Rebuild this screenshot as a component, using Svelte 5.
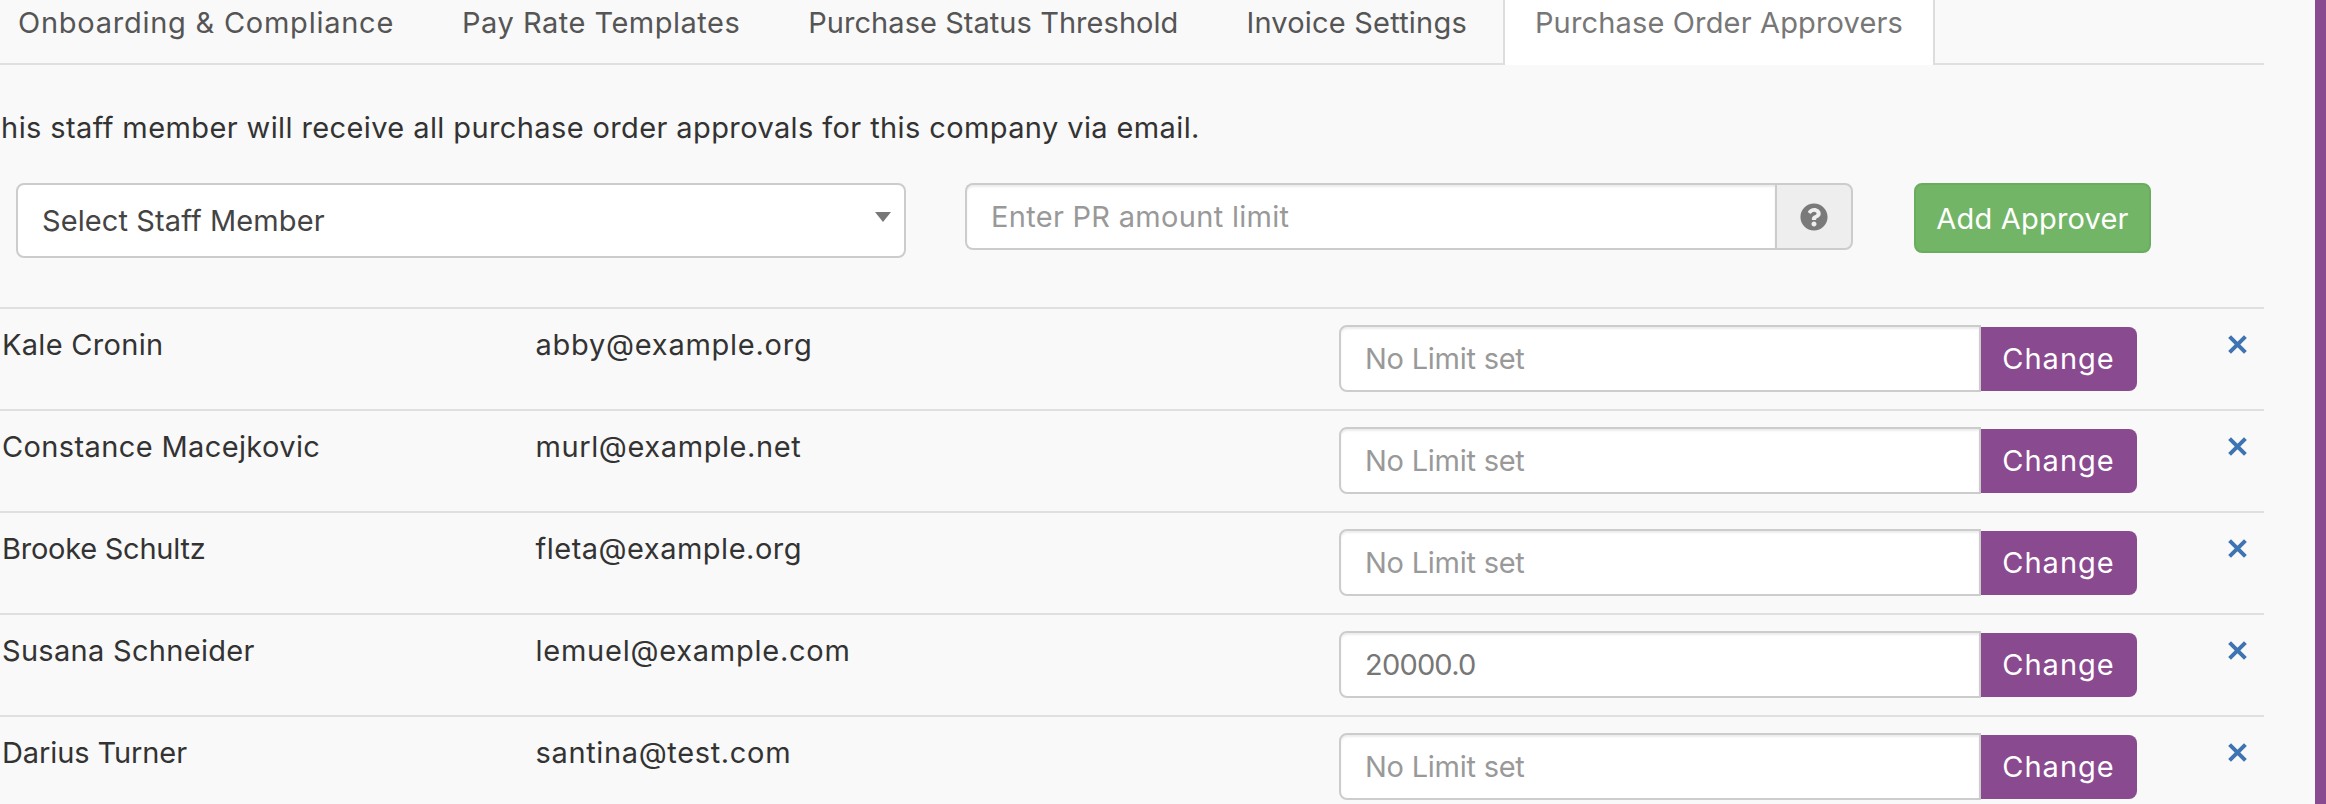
<script>
  const tabs = [
    { label: "Onboarding & Compliance", tracking: 0.75 },
    { label: "Pay Rate Templates", tracking: 0.5 },
    { label: "Purchase Status Threshold", tracking: 0.05 },
    { label: "Invoice Settings", tracking: 0.2 },
    { label: "Purchase Order Approvers", tracking: 0.15, active: true }
  ];

  const approvers = [
    { name: "Kale Cronin", email: "abby@example.org", limit: "", nameTracking: 0.3, emailTracking: 0.75 },
    { name: "Constance Macejkovic", email: "murl@example.net", limit: "", nameTracking: 0.38, emailTracking: 0.6 },
    { name: "Brooke Schultz", email: "fleta@example.org", limit: "", nameTracking: -0.25, emailTracking: 0.5 },
    { name: "Susana Schneider", email: "lemuel@example.com", limit: "20000.0", nameTracking: 0.3, emailTracking: 0.75 },
    { name: "Darius Turner", email: "santina@test.com", limit: "", nameTracking: -0.1, emailTracking: 0.65 }
  ];
</script>

<div class="page">
  <main class="content">
    <ul class="tabs">
      {#each tabs as tab}
        <li class="tab" class:active={tab.active} style="letter-spacing: {tab.tracking}px">{tab.label}</li>
      {/each}
    </ul>

    <p class="hint">This staff member will receive all purchase order approvals for this company via email.</p>

    <div class="form-row">
      <div class="select-wrap">
        <select class="staff-select">
          <option>Select Staff Member</option>
        </select>
        <span class="caret"></span>
      </div>
      <div class="limit-group">
        <input class="limit-input" type="text" placeholder="Enter PR amount limit" />
        <span class="addon">
          <svg viewBox="0 0 512 512" width="28" height="28" aria-hidden="true">
            <path fill="#7a7a7a" d="M504 256c0 136.997-111.043 248-248 248S8 392.997 8 256C8 119.083 119.043 8 256 8s248 111.083 248 248zM262.655 90c-54.497 0-89.255 22.957-116.549 63.758-3.536 5.286-2.353 12.415 2.715 16.258l34.699 26.31c5.205 3.947 12.621 3.008 16.665-2.122 17.864-22.658 30.113-35.797 57.303-35.797 20.429 0 45.698 13.148 45.698 32.958 0 14.976-12.363 22.667-32.534 33.976C247.128 238.528 216 254.941 216 296v4c0 6.627 5.373 12 12 12h56c6.627 0 12-5.373 12-12v-1.333c0-28.462 83.186-29.647 83.186-106.667 0-58.002-60.165-102-116.531-102zM256 338c-25.365 0-46 20.635-46 46 0 25.364 20.635 46 46 46s46-20.636 46-46c0-25.365-20.635-46-46-46z" />
          </svg>
        </span>
      </div>
      <button class="add-btn">Add Approver</button>
    </div>

    <div class="approvers">
      {#each approvers as person}
        <div class="row">
          <div class="name" style="letter-spacing: {person.nameTracking}px">{person.name}</div>
          <div class="email" style="letter-spacing: {person.emailTracking}px">{person.email}</div>
          <div class="limit-cell">
            <input class="row-input" type="text" placeholder="No Limit set" value={person.limit} />
            <button class="change-btn">Change</button>
          </div>
          <div class="remove">
            <svg viewBox="0 0 18 18" width="19" height="19" aria-hidden="true">
              <path d="M1.5 1.5 L16.5 16.5 M16.5 1.5 L1.5 16.5" stroke="#3f74b2" stroke-width="3.8" fill="none" />
            </svg>
          </div>
        </div>
      {/each}
    </div>
  </main>
  <div class="edge"></div>
</div>

<style>
  :global(body) {
    margin: 0;
    background: #f9f9f9;
  }

  .page {
    display: flex;
    justify-content: space-between;
    height: 804px;
    overflow: hidden;
    font-family: Inter, "Liberation Sans", sans-serif;
    font-size: 29px;
    color: #333;
  }

  .content {
    width: 2264px;
    flex: none;
  }

  .edge {
    width: 11px;
    background: #8a4a90;
  }

  .tabs {
    display: flex;
    list-style: none;
    margin: 0 0 0 -14px;
    padding: 0;
    height: 65px;
    box-sizing: border-box;
    border-bottom: 2px solid #e0e0e0;
  }

  .tab {
    padding: 0 30px;
    margin-right: 4px;
    border: 2px solid transparent;
    border-width: 0 2px;
    height: 46px;
    line-height: 46px;
    color: #555;
    white-space: nowrap;
  }

  .tab.active {
    height: 65px;
    background: #fff;
    border-color: #ddd;
    color: #777;
  }

  .hint {
    margin: 43px 0 0 -18px;
    line-height: 40px;
    letter-spacing: 0.39px;
    color: #333;
  }

  .form-row {
    display: flex;
    align-items: flex-start;
    margin: 35px 0 0 16px;
  }

  .select-wrap {
    position: relative;
    width: 890px;
    flex: none;
  }

  .staff-select {
    display: block;
    width: 100%;
    height: 75px;
    box-sizing: border-box;
    appearance: none;
    background: #fff;
    border: 2px solid #ccc;
    border-radius: 8px;
    padding: 0 24px;
    font: inherit;
    letter-spacing: 0.1px;
    color: #444;
  }

  .caret {
    position: absolute;
    right: 15px;
    top: 29px;
    border-left: 8px solid transparent;
    border-right: 8px solid transparent;
    border-top: 10px solid #777;
  }

  .limit-group {
    display: flex;
    width: 888px;
    height: 67px;
    margin-left: 59px;
    flex: none;
  }

  .limit-input,
  .row-input {
    flex: 1;
    min-width: 0;
    box-sizing: border-box;
    height: 100%;
    border: 2px solid #ccc;
    border-radius: 8px 0 0 8px;
    padding: 0 24px;
    font: inherit;
    color: #777;
    background: #fff;
    box-shadow: inset 0 2px 2px rgba(0, 0, 0, 0.075);
    outline: none;
  }

  .limit-input {
    border-right: 0;
    letter-spacing: 0.3px;
  }

  .row-input {
    letter-spacing: -0.8px;
  }

  .limit-input::placeholder,
  .row-input::placeholder {
    color: #999;
    opacity: 1;
  }

  .row-input::placeholder {
    letter-spacing: -0.25px;
  }

  .addon {
    display: flex;
    align-items: center;
    justify-content: center;
    width: 78px;
    box-sizing: border-box;
    background: #eee;
    border: 2px solid #ccc;
    border-radius: 0 8px 8px 0;
  }

  .add-btn {
    width: 237px;
    height: 70px;
    margin-left: 61px;
    flex: none;
    background: #72b566;
    border: 2px solid #6aad5e;
    border-radius: 8px;
    color: #fff;
    font: inherit;
    letter-spacing: 0.2px;
    padding: 0;
  }

  .approvers {
    margin-top: 49px;
  }

  .row {
    display: grid;
    grid-template-columns: 533.5px 803.5px 797.5px 1fr;
    height: 102px;
    box-sizing: border-box;
    border-top: 2px solid #e0e0e0;
    padding-left: 2px;
    padding-top: 16px;
  }

  .name,
  .email {
    line-height: 40px;
    color: #333;
  }

  .limit-cell {
    display: flex;
    align-items: center;
    height: 67px;
  }

  .change-btn {
    width: 156px;
    height: 64px;
    flex: none;
    background: #8a4a90;
    border: 0;
    border-radius: 0 8px 8px 0;
    color: #fff;
    font: inherit;
    letter-spacing: 1px;
    padding: 0;
  }

  .remove {
    display: flex;
    justify-content: flex-start;
    padding: 10px 0 0 91px;
  }
</style>
